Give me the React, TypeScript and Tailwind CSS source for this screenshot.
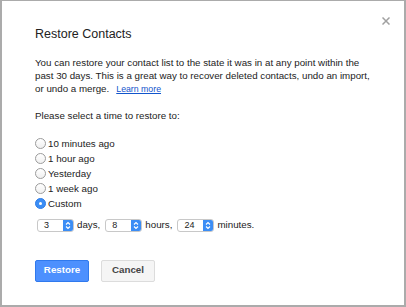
import { useState } from "react";

const options = ["10 minutes ago", "1 hour ago", "Yesterday", "1 week ago", "Custom"];

function Radio({ checked }: { checked: boolean }) {
  return checked ? (
    <span className="flex h-[11px] w-[11px] shrink-0 items-center justify-center rounded-full bg-[#3b8df5] border border-[#2f7de8]">
      <span className="h-[3px] w-[3px] rounded-full bg-white" />
    </span>
  ) : (
    <span className="h-[11px] w-[11px] shrink-0 rounded-full border border-[#9b9b9b] bg-gradient-to-b from-white to-[#f0f0f0]" />
  );
}

function Spinner({ value }: { value: string }) {
  return (
    <div className="flex h-[13px] w-[37px] items-stretch overflow-hidden rounded-[3px] border border-[#c8c8c8] bg-white">
      <span className="flex-1 pl-[6px] text-[9px] leading-[11px] text-[#222]">{value}</span>
      <span className="flex w-[10px] items-center justify-center bg-[#3b8df5]">
        <svg width="6" height="9" viewBox="0 0 6 9" fill="none" stroke="white" strokeWidth="1.1">
          <path d="M1 3.5 L3 1.5 L5 3.5" />
          <path d="M1 5.5 L3 7.5 L5 5.5" />
        </svg>
      </span>
    </div>
  );
}

export default function App() {
  const [selected, setSelected] = useState("Custom");

  return (
    <div
      className="relative h-[307px] w-[406px] border-x-2 border-t border-b-2 border-[#ababab] bg-white text-[9.75px] text-[#222]"
      style={{ fontFamily: '"Liberation Sans", Arial, sans-serif' }}
    >
      {/* close */}
      <button className="absolute right-[14px] top-[16px] text-[#a0a0a0]">
        <svg width="8" height="8" viewBox="0 0 8 8" stroke="currentColor" strokeWidth="1.5">
          <path d="M0.5 0.5 L7.5 7.5 M7.5 0.5 L0.5 7.5" />
        </svg>
      </button>

      <div className="pl-[33px] pr-[30px] pt-[26px]">
        <h1 className="text-[12.5px] leading-[15px] text-[#222]">Restore Contacts</h1>

        <p className="mt-[14px] leading-[13px]">
          You can restore your contact list to the state it was in at any point within the past 30 days. This is a
          great way to recover deleted contacts, undo an import, or undo a merge.
          <a className="ml-[7px] text-[8.75px] leading-[10px] text-[#1155cc] underline">Learn more</a>
        </p>

        <p className="mt-[14px] leading-[13px]">Please select a time to restore to:</p>

        <div className="mt-[14px] flex flex-col">
          {options.map((o) => (
            <label key={o} className="flex h-[15px] items-center gap-[2px]" onClick={() => setSelected(o)}>
              <Radio checked={selected === o} />
              <span className="leading-[15px]">{o}</span>
            </label>
          ))}
        </div>

        <div className="ml-[2px] mt-[7px] flex items-center gap-[3px]">
          <Spinner value="3" />
          <span className="mr-[2px]">days,</span>
          <Spinner value="8" />
          <span className="mr-[2px]">hours,</span>
          <Spinner value="24" />
          <span>minutes.</span>
        </div>

        <div className="mt-[27px] flex gap-[12px]">
          <button className="h-[22px] w-[54px] rounded-[2px] border border-[#3079ed] bg-[#4d90fe] text-[9.75px] font-bold text-white">
            Restore
          </button>
          <button className="h-[22px] w-[54px] rounded-[2px] border border-[#dcdcdc] bg-[#f5f5f5] text-[9.75px] font-bold text-[#444]">
            Cancel
          </button>
        </div>
      </div>
    </div>
  );
}
